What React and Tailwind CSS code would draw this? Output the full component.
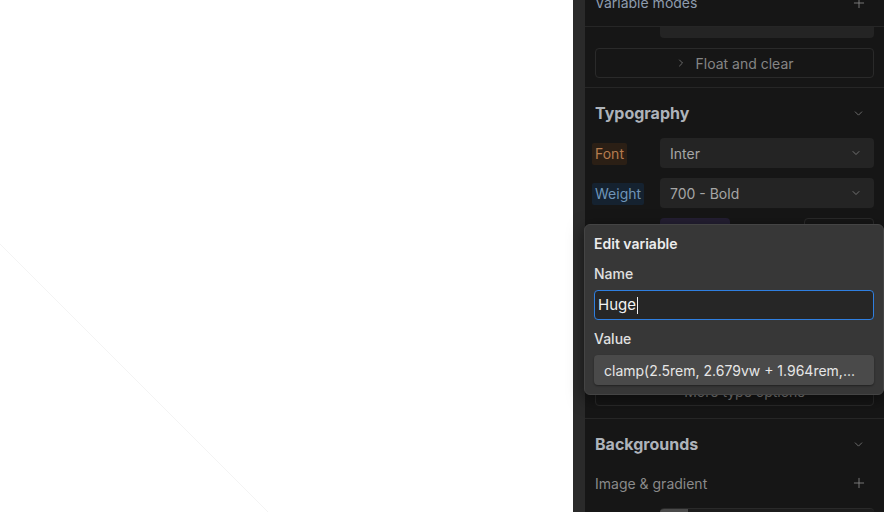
import { ChevronDown, ChevronRight, Plus } from "lucide-react";

const font = { fontFamily: "Inter, 'Noto Sans', sans-serif" };

function SelectBox({ value }) {
  return (
    <div className="flex h-[30px] flex-1 items-center justify-between rounded-[4px] bg-[#242424] pl-[10px] pr-[12px] text-[14px] text-[#a6a6a6]">
      <span>{value}</span>
      <ChevronDown size={12} strokeWidth={1.5} className="text-[#8a8a8a]" />
    </div>
  );
}

function SectionHeader({ title }) {
  return (
    <div className="flex h-[30px] items-center justify-between">
      <span className="text-[16px] font-bold text-[#aeb3ba]">{title}</span>
      <ChevronDown size={13} strokeWidth={1.5} className="mr-[9px] text-[#7d7d7d]" />
    </div>
  );
}

function OutlineButton({ label }) {
  return (
    <div className="flex h-[30px] items-center justify-center gap-[8px] rounded-[4px] border border-[#2a2a2a] text-[14px] text-[#858585]">
      <ChevronRight size={12} strokeWidth={1.5} />
      <span>{label}</span>
    </div>
  );
}

function EditVariable() {
  return (
    <div className="absolute left-[584px] top-[224px] w-[300px] rounded-[6px] border border-[#444444] bg-[#373737] px-[9px] py-[9px] shadow-[0_4px_16px_rgba(0,0,0,0.5)]">
      <div className="text-[14px] font-semibold leading-[20px] text-[#ececec]">Edit variable</div>
      <div className="mt-[10px] text-[14px] font-medium leading-[20px] text-[#e0e0e0]">Name</div>
      <div className="mt-[6px] flex h-[30px] items-center rounded-[4px] border border-[#2f7fe0] bg-[#262626] px-[3px] text-[15px] text-[#f2f2f2]">
        <span>Huge</span>
        <span className="ml-[1px] h-[17px] w-[1px] bg-[#f2f2f2]" />
      </div>
      <div className="mt-[9px] text-[14px] font-medium leading-[20px] text-[#e0e0e0]">Value</div>
      <div className="mt-[6px] flex h-[30px] items-center rounded-[4px] bg-[#4a4a4a] px-[10px] text-[14px] text-[#e6e6e6] shadow-[0_1px_2px_rgba(0,0,0,0.4)]">
        clamp(2.5rem, 2.679vw + 1.964rem,...
      </div>
    </div>
  );
}

export default function App() {
  return (
    <div className="relative flex h-[512px] w-[884px] overflow-hidden bg-white" style={font}>
      <div className="relative flex-1">
        <svg className="absolute inset-0 h-full w-full" viewBox="0 0 573 512">
          <line x1="0" y1="244" x2="268" y2="512" stroke="#f4f4f4" strokeWidth="1" />
        </svg>
      </div>

      <div className="w-[12px] bg-[#2a2a2a]" />

      <div className="flex w-[299px] flex-col overflow-hidden bg-[#161616] px-[10px] [&>*]:shrink-0">
        <div className="-mx-[10px] flex h-[27px] items-start justify-between overflow-hidden border-b border-[#262626] px-[10px]">
          <span className="-mt-[7px] text-[14px] leading-[20px] text-[#8e9cae]">Variable modes</span>
          <Plus size={16} strokeWidth={1.25} className="-mt-[5px] mr-[7px] text-[#8a8a8a]" />
        </div>

        <div className="flex h-[11px] items-end gap-[10px] overflow-hidden">
          <div className="h-[30px] w-[55px]" />
          <div className="h-[30px] flex-1 rounded-[4px] bg-[#242424]" />
        </div>

        <div className="mt-[10px] pb-[9px]">
          <OutlineButton label="Float and clear" />
        </div>

        <div className="-mx-[10px] border-t border-[#262626] px-[10px] pt-[10px]">
          <SectionHeader title="Typography" />
          <div className="mt-[10px] flex flex-col gap-[10px]">
            <div className="flex items-center gap-[17px]">
              <div className="w-[48px]">
                <span className="-ml-[3px] inline-block rounded-[2px] bg-[#2b1f15] px-[3px] text-[14px] leading-[22px] text-[#b57c4f]">Font</span>
              </div>
              <SelectBox value="Inter" />
            </div>
            <div className="flex items-center gap-[17px]">
              <div className="w-[48px]">
                <span className="-ml-[3px] inline-block rounded-[2px] bg-[#152230] px-[3px] text-[14px] leading-[22px] text-[#6f95b8]">Weight</span>
              </div>
              <SelectBox value="700 - Bold" />
            </div>
            <div className="flex h-[30px] items-center gap-[17px]">
              <div className="w-[48px]" />
              <div className="h-[30px] w-[70px] rounded-[4px] bg-[#241f33]" />
              <div className="flex-1" />
              <div className="h-[30px] w-[70px] rounded-[4px] border border-[#2a2a2a]" />
            </div>
            <div className="h-[30px]" />
            <div className="h-[30px]" />
            <div className="h-[30px]" />
          </div>
          <div className="mt-[8px] pb-[12px]">
            <OutlineButton label="More type options" />
          </div>
        </div>

        <div className="-mx-[10px] border-t border-[#262626] px-[10px] pt-[10px]">
          <SectionHeader title="Backgrounds" />
          <div className="mt-[9px] flex h-[30px] items-center justify-between">
            <span className="text-[14px] text-[#8a8a8a]">Image &amp; gradient</span>
            <Plus size={16} strokeWidth={1.25} className="mr-[7px] text-[#8a8a8a]" />
          </div>
          <div className="mt-[10px] flex gap-[17px]">
            <div className="w-[48px]" />
            <div className="flex h-[30px] flex-1 overflow-hidden rounded-[4px] border-t border-[#2a2a2a] bg-[#1c1c1c]">
              <div className="h-full w-[28px] bg-[#4a4a4a]" />
            </div>
          </div>
        </div>
      </div>

      <EditVariable />
    </div>
  );
}
